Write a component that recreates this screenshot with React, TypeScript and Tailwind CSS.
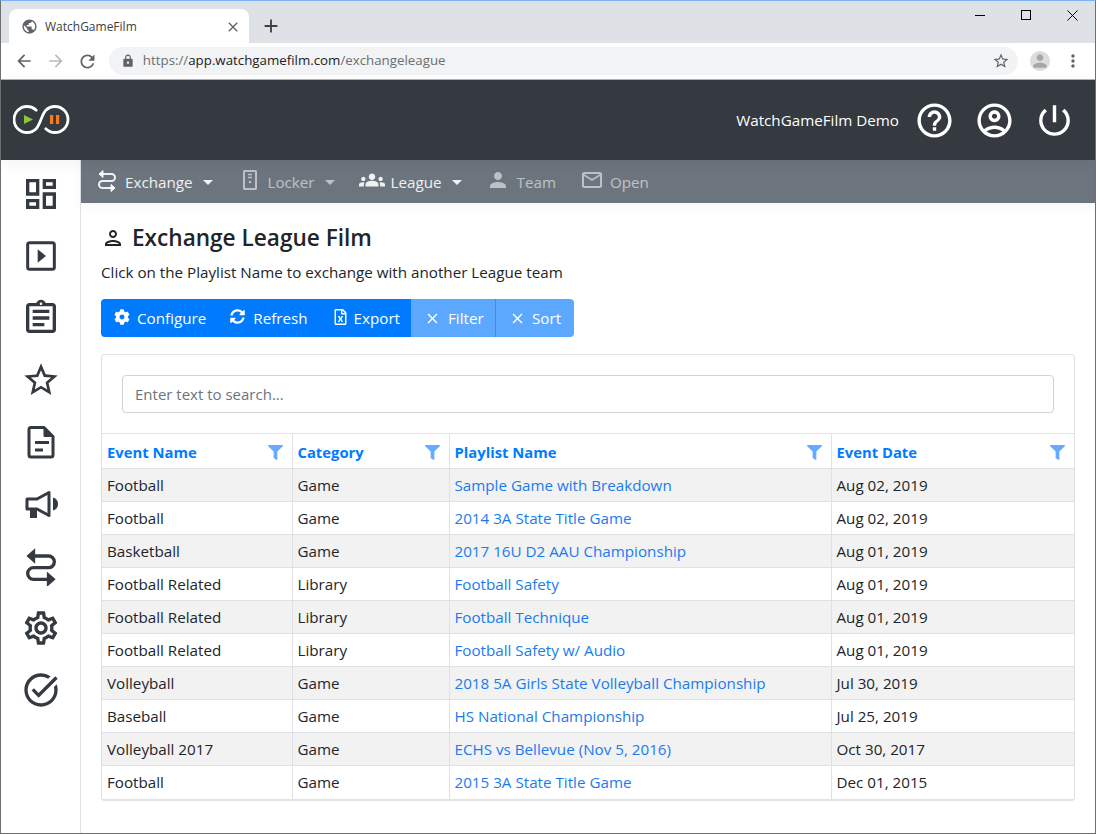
import {
  MdArrowBack, MdArrowForward, MdRefresh, MdLock, MdPublic, MdStarBorder, MdMoreVert, MdClose, MdAdd, MdPerson,
  MdOutlineDashboard, MdOutlineAssignment, MdOutlineSettings, MdOutlineTaskAlt,
  MdHelpOutline, MdOutlineAccountCircle, MdPowerSettingsNew, MdOutlinePerson, MdGroups, MdMailOutline,
} from 'react-icons/md';
import { FaCog, FaSyncAlt, FaRegFileExcel, FaFilter } from 'react-icons/fa';

function SwapIcon({ className }: { className?: string }) {
  return (
    <svg className={className} viewBox="0 0 24 24" fill="none" stroke="currentColor" strokeWidth={2}>
      <path d="M4.500 6h12a3.500 3.500 0 0 1 0 7h-9a3.500 3.500 0 0 0 0 7h12" />
      <path d="M8 2.500 4 6l4 3.500z" fill="currentColor" strokeWidth={1} />
      <path d="M16 16.500 20 20l-4 3.500z" fill="currentColor" strokeWidth={1} />
    </svg>
  );
}

function PlayBoxIcon({ className }: { className?: string }) {
  return (
    <svg className={className} viewBox="0 0 24 24" fill="none">
      <rect x="4" y="4" width="16" height="16" rx="1.2" stroke="currentColor" strokeWidth={1.8} />
      <path d="M10 8l5 4-5 4z" fill="currentColor" />
    </svg>
  );
}

function FileIcon({ className }: { className?: string }) {
  return (
    <svg className={className} viewBox="0 0 40 40" fill="none" stroke="currentColor" strokeWidth={3}>
      <path d="M10 5.500h13l9 9V33a2 2 0 0 1-2 2H10a2 2 0 0 1-2-2V7.500a2 2 0 0 1 2-2z" strokeLinejoin="round" />
      <path d="M23 5.500l9 9h-9z" fill="currentColor" strokeWidth={1} />
      <path d="M14 20.500h14M14 28h8" />
    </svg>
  );
}

function BullhornIcon({ className }: { className?: string }) {
  return (
    <svg className={className} viewBox="0 0 40 40" fill="none">
      <path d="M6 15h10l12-6.500v23L16 25H6z" stroke="currentColor" strokeWidth={3} strokeLinejoin="round" />
      <path d="M9 26h7v8H9z" fill="currentColor" />
      <path d="M32 13.500c3.500 1 5 3.500 5 6.500s-1.500 5.500-5 6.500z" fill="currentColor" />
    </svg>
  );
}

function LockerIcon({ className }: { className?: string }) {
  return (
    <svg className={className} viewBox="0 0 14 20" fill="none">
      <rect x="1" y="1" width="12" height="18" rx="0.5" stroke="currentColor" strokeWidth={2} />
      <path d="M5 4.500h4M5 7.500h4" stroke="currentColor" strokeWidth={1.6} />
      <circle cx="7" cy="12" r="1.300" fill="currentColor" />
    </svg>
  );
}

function Logo() {
  return (
    <svg className="h-[30px] w-[58px]" viewBox="0 0 58 30" fill="none">
      <path
        d="M23.200 5.300A13 13 0 1 0 23.200 23.700C27 20 29 9 32.800 5.300A13 13 0 1 1 32.800 23.700"
        stroke="#fff"
        strokeWidth={2.800}
        strokeLinecap="round"
      />
      <path d="M11 10l9 4.500-9 4.500z" fill="#8cc63f" />
      <path d="M37 10h3.200v9H37zM43 10h3.200v9H43z" fill="#f47b20" />
    </svg>
  );
}

const sideIcons = [
  MdOutlineDashboard, PlayBoxIcon, MdOutlineAssignment, MdStarBorder, FileIcon,
  BullhornIcon, SwapIcon, MdOutlineSettings, MdOutlineTaskAlt,
];

const rows = [
  ['Football', 'Game', 'Sample Game with Breakdown', 'Aug 02, 2019'],
  ['Football', 'Game', '2014 3A State Title Game', 'Aug 02, 2019'],
  ['Basketball', 'Game', '2017 16U D2 AAU Championship', 'Aug 01, 2019'],
  ['Football Related', 'Library', 'Football Safety', 'Aug 01, 2019'],
  ['Football Related', 'Library', 'Football Technique', 'Aug 01, 2019'],
  ['Football Related', 'Library', 'Football Safety w/ Audio', 'Aug 01, 2019'],
  ['Volleyball', 'Game', '2018 5A Girls State Volleyball Championship', 'Jul 30, 2019'],
  ['Baseball', 'Game', 'HS National Championship', 'Jul 25, 2019'],
  ['Volleyball 2017', 'Game', 'ECHS vs Bellevue (Nov 5, 2016)', 'Oct 30, 2017'],
  ['Football', 'Game', '2015 3A State Title Game', 'Dec 01, 2015'],
];

const columns = [
  { name: 'Event Name', width: 'w-[190px]' },
  { name: 'Category', width: 'w-[157px]' },
  { name: 'Playlist Name', width: 'w-[382px]' },
  { name: 'Event Date', width: 'w-[243px]' },
];

function Caret() {
  return <span className="ml-[10px] mt-[1px] h-0 w-0 border-x-[5px] border-t-[5px] border-x-transparent border-t-current" />;
}

export default function App() {
  return (
    <div className="flex h-[834px] w-[1096px] flex-col overflow-hidden border-x border-b border-t border-x-[#6f6f6f] border-b-[#6f6f6f] border-t-[#7ab4f5] bg-white font-['Open_Sans',sans-serif] text-[15.200px] text-[#212529]">
      {/* Browser tab strip */}
      <div className="flex h-[42px] shrink-0 items-end bg-[#dee1e6] pl-2">
        <div className="flex h-[34px] w-[240px] items-center rounded-t-lg bg-white pl-[12px] pr-[8px] pt-[1px] text-[#3c4043]">
          <MdPublic className="h-[17px] w-[17px] text-[#5f6368]" />
          <span className="ml-[7px] flex-1 text-xs">WatchGameFilm</span>
          <MdClose className="h-4 w-4 text-[#5f6368]" />
        </div>
        <MdAdd className="mb-[6px] ml-[11px] h-[22px] w-[22px] text-[#3c4043]" />
        <div className="ml-auto flex h-full items-start pt-[3px] text-black">
          <div className="flex h-[22px] w-[46px] items-center justify-center">
            <div className="h-px w-[10px] bg-black" />
          </div>
          <div className="flex h-[22px] w-[46px] items-center justify-center">
            <div className="h-[10px] w-[10px] border border-black" />
          </div>
          <div className="flex h-[22px] w-[46px] items-center justify-center">
            <svg className="h-[11px] w-[11px]" viewBox="0 0 11 11" stroke="currentColor" fill="none">
              <path d="M.5.5l10 10M10.500.5l-10 10" />
            </svg>
          </div>
        </div>
      </div>

      {/* Browser toolbar */}
      <div className="flex h-[37px] shrink-0 items-center border-b border-[#b3b3b3] bg-white pl-[13px] pr-[12px]">
        <MdArrowBack className="h-[20px] w-[20px] text-[#5f6368]" />
        <MdArrowForward className="ml-[12px] h-[20px] w-[20px] text-[#b8bbbe]" />
        <MdRefresh className="ml-[11px] h-[21px] w-[21px] text-[#5f6368]" />
        <div className="ml-[11px] flex h-[28px] w-[911px] items-center rounded-full bg-[#f1f3f4] pl-[12px] pr-[8px] text-[13.300px]">
          <MdLock className="h-[14px] w-[14px] text-[#5f6368]" />
          <span className="ml-[8px] flex-1 text-[#6b6f73]">
            https://<span className="text-[#202124]">app.watchgamefilm.com</span>/exchangeleague
          </span>
          <MdStarBorder className="h-[18px] w-[18px] text-[#5f6368]" />
        </div>
        <div className="ml-[12px] flex h-5 w-5 items-center justify-center overflow-hidden rounded-full bg-[#dadce0]">
          <MdPerson className="h-5 w-5 text-[#a6a6a6]" />
        </div>
        <MdMoreVert className="ml-[13px] h-[20px] w-[20px] text-[#5f6368]" />
      </div>

      {/* App header */}
      <div className="relative z-20 flex h-[80px] shrink-0 items-center bg-[#343a40] pl-[12px] pr-[20px] text-white shadow-[0_4px_14px_rgba(0,0,0,0.05)]">
        <Logo />
        <span className="ml-auto text-[15.200px]">WatchGameFilm Demo</span>
        <MdHelpOutline className="ml-[15px] h-[41px] w-[41px]" />
        <MdOutlineAccountCircle className="ml-[19px] h-[41px] w-[41px]" />
        <MdPowerSettingsNew className="ml-[19px] h-[41px] w-[41px]" />
      </div>

      <div className="flex min-h-0 flex-1">
        {/* Side rail */}
        <div className="flex w-[80px] shrink-0 flex-col items-center border-r border-[#dee2e6] pt-[3px] text-[#343a40]">
          {sideIcons.map((Icon, i) => (
            <div key={i} className="flex h-[62px] w-full shrink-0 items-center justify-center">
              <Icon className="h-[40px] w-[40px]" />
            </div>
          ))}
        </div>

        <div className="flex min-w-0 flex-1 flex-col">
          {/* Sub nav */}
          <div className="relative z-10 flex h-[43px] shrink-0 items-center bg-[#6c757d] pl-[14px] text-white/55 shadow-[0_4px_14px_rgba(0,0,0,0.04)]">
            <div className="flex items-center text-white/90">
              <SwapIcon className="mb-[4px] h-[24px] w-[24px]" />
              <span className="ml-[6px] mt-[1px]">Exchange</span>
              <Caret />
            </div>
            <div className="ml-[30px] flex items-center">
              <LockerIcon className="mb-[4px] h-[20px] w-[14px]" />
              <span className="ml-[11px] mt-[1px]">Locker</span>
              <Caret />
            </div>
            <div className="ml-[24px] flex items-center text-white/90">
              <MdGroups className="mb-[4px] h-[26px] w-[26px]" />
              <span className="ml-[6px] mt-[1px]">League</span>
              <Caret />
            </div>
            <div className="ml-[24px] flex items-center">
              <MdPerson className="mb-[4px] h-[24px] w-[24px]" />
              <span className="ml-[7px] mt-[1px]">Team</span>
            </div>
            <div className="ml-[24px] flex items-center">
              <MdMailOutline className="mb-[4px] h-[24px] w-[24px]" />
              <span className="ml-[6px] mt-[1px]">Open</span>
            </div>
          </div>

          {/* Page content */}
          <div className="flex flex-col pl-[20px] pr-[20px]">
            <div className="mt-[19px] flex h-[32px] items-center">
              <MdOutlinePerson className="h-[24px] w-[24px]" />
              <h1 className="ml-[7px] text-[22.600px] font-semibold">Exchange League Film</h1>
            </div>
            <p className="mt-[7px] h-[22px] leading-[22px]">Click on the Playlist Name to exchange with another League team</p>

            <div className="mt-[16px] flex h-[38px] w-[473px] overflow-hidden rounded text-white">
              <div className="flex w-[310px] items-center bg-[#007bff] pl-[13px]">
                <FaCog className="mb-[3px] h-[16px] w-[16px]" />
                <span className="ml-[7px]">Configure</span>
                <FaSyncAlt className="mb-[3px] ml-[24px] h-[15px] w-[15px]" />
                <span className="ml-[8px]">Refresh</span>
                <FaRegFileExcel className="mb-[2px] ml-[26px] h-[16px] w-[13px]" />
                <span className="ml-[7px]">Export</span>
              </div>
              <div className="flex w-[85px] items-center border-r border-[#3b8ff0] bg-[#5ca8ff] pl-[13px]">
                <MdClose className="h-[17px] w-[17px]" />
                <span className="ml-[7px]">Filter</span>
              </div>
              <div className="flex flex-1 items-center bg-[#5ca8ff] pl-[13px]">
                <MdClose className="h-[17px] w-[17px]" />
                <span className="ml-[6px]">Sort</span>
              </div>
            </div>

            {/* Card with search and table */}
            <div className="mt-[17px] w-[974px] rounded border border-b-2 border-[#dfe2e6]">
              <div className="h-[78px] pl-[20px] pr-[20px] pt-[20px]">
                <input
                  readOnly
                  placeholder="Enter text to search..."
                  className="h-[38px] w-full rounded border border-[#ced4da] bg-white px-[12px] text-[15px] outline-none placeholder:text-[#6c757d]"
                />
              </div>
              <table className="w-full table-fixed border-collapse">
                <thead>
                  <tr className="h-[35px]">
                    {columns.map((col, i) => (
                      <th
                        key={col.name}
                        className={`${col.width} border-t border-[#dee2e6] px-[5px] text-left align-middle ${i > 0 ? 'border-l' : ''}`}
                      >
                        <div className="flex items-center justify-between pr-[4px] pt-[2px] text-[14.800px] font-bold text-[#007bff]">
                          <span>{col.name}</span>
                          <FaFilter className="h-[15px] w-[15px] text-[#66abff]" />
                        </div>
                      </th>
                    ))}
                  </tr>
                </thead>
                <tbody>
                  {rows.map((row, i) => (
                    <tr key={i} className={`h-[33px] ${i % 2 === 0 ? 'bg-[#f2f2f2]' : 'bg-white'}`}>
                      {row.map((cell, j) => (
                        <td
                          key={j}
                          className={`border-t border-[#dee2e6] px-[5px] align-middle ${j > 0 ? 'border-l' : ''} ${j === 2 ? 'text-[#1a7bf0]' : ''}`}
                        >
                          {cell}
                        </td>
                      ))}
                    </tr>
                  ))}
                </tbody>
              </table>
            </div>
          </div>
        </div>
      </div>
    </div>
  );
}
